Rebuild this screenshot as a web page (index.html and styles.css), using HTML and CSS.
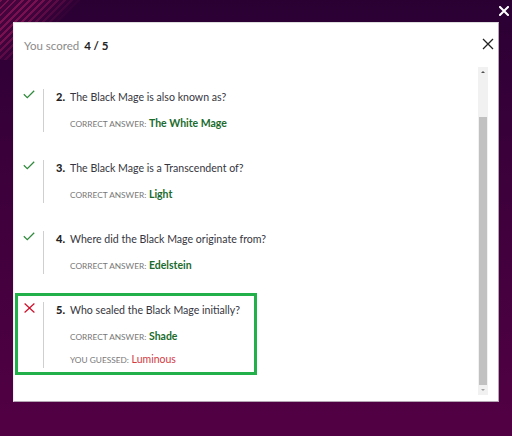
FILE: index.html
```html
<!DOCTYPE html>
<html lang="en">
<head>
<meta charset="utf-8">
<title>Quiz results</title>
<link rel="stylesheet" href="styles.css">
</head>
<body>
<div class="bg-stripes"></div>
<button class="page-close" aria-label="Close">
  <svg viewBox="0 0 10 10" width="10" height="10"><path d="M1 1 L9 9 M9 1 L1 9" stroke="#fff" stroke-width="2" stroke-linecap="square"/></svg>
</button>
<div class="modal">
  <div class="modal-head">
    <span class="score-label">You scored</span>
    <strong class="score">4 / 5</strong>
    <button class="modal-close" aria-label="Close">
      <svg viewBox="0 0 12 12" width="12" height="12"><path d="M1 1 L11 11 M11 1 L1 11" stroke="#222" stroke-width="1.3"/></svg>
    </button>
  </div>
  <div class="modal-body">
    <div class="results">
      <div class="item">
        <div class="icon"><svg viewBox="0 0 12 9" width="12" height="9"><path d="M0.8 4.2 L4.3 7.6 L11.2 0.8" fill="none" stroke="#2f8a3c" stroke-width="1.3"/></svg></div>
        <div class="rule"></div>
        <div class="content">
          <div class="question"><b class="num">2.</b>The Black Mage is also known as?</div>
          <div class="answer"><span class="label">Correct answer:</span> <span class="correct">The White Mage</span></div>
        </div>
      </div>
      <div class="item">
        <div class="icon"><svg viewBox="0 0 12 9" width="12" height="9"><path d="M0.8 4.2 L4.3 7.6 L11.2 0.8" fill="none" stroke="#2f8a3c" stroke-width="1.3"/></svg></div>
        <div class="rule"></div>
        <div class="content">
          <div class="question"><b class="num">3.</b>The Black Mage is a Transcendent of?</div>
          <div class="answer"><span class="label">Correct answer:</span> <span class="correct">Light</span></div>
        </div>
      </div>
      <div class="item">
        <div class="icon"><svg viewBox="0 0 12 9" width="12" height="9"><path d="M0.8 4.2 L4.3 7.6 L11.2 0.8" fill="none" stroke="#2f8a3c" stroke-width="1.3"/></svg></div>
        <div class="rule"></div>
        <div class="content">
          <div class="question"><b class="num">4.</b>Where did the Black Mage originate from?</div>
          <div class="answer"><span class="label">Correct answer:</span> <span class="correct">Edelstein</span></div>
        </div>
      </div>
      <div class="item selected">
        <div class="icon"><svg viewBox="0 0 11 10" width="11" height="10"><path d="M0.6 0.5 L10.4 9.5 M10.4 0.5 L0.6 9.5" stroke="#d0102a" stroke-width="1.2"/></svg></div>
        <div class="rule"></div>
        <div class="content">
          <div class="question"><b class="num">5.</b>Who sealed the Black Mage initially?</div>
          <div class="answer"><span class="label">Correct answer:</span> <span class="correct">Shade</span></div>
          <div class="answer guess-row"><span class="label">You guessed:</span> <span class="wrong">Luminous</span></div>
        </div>
      </div>
    </div>
    <div class="scrollbar">
      <div class="sb-arrow up"></div>
      <div class="sb-track"><div class="sb-thumb"></div></div>
      <div class="sb-arrow down"></div>
    </div>
  </div>
</div>
</body>
</html>
```
FILE: styles.css
```css
* { box-sizing: border-box; }
html, body { margin: 0; padding: 0; }
body {
  width: 512px;
  height: 436px;
  overflow: hidden;
  position: relative;
  font-family: "Lato", "Open Sans", sans-serif;
  background: linear-gradient(to bottom, #2a0033 0%, #3a003a 35%, #520044 100%);
}
.bg-stripes {
  position: absolute;
  left: 0; top: 0;
  width: 80px; height: 60px;
  background: repeating-linear-gradient(135deg, #7a1050 0 2px, #43043e 2px 5px);
  -webkit-mask-image: linear-gradient(135deg, #000 0%, #000 30%, transparent 60%);
  mask-image: linear-gradient(135deg, #000 0%, #000 30%, transparent 60%);
}
button { background: none; border: 0; padding: 0; margin: 0; cursor: pointer; display: block; }
.page-close {
  position: absolute;
  left: 499px; top: 6px;
  width: 10px; height: 10px;
}
.page-close svg, .modal-close svg { display: block; }
.modal {
  position: relative;
  margin: 22px 0 0 13px;
  width: 486px;
  height: 380px;
  background: #fff;
  border: 1px solid #b4a6b2;
  border-top-color: #ddd;
  border-left-color: #eee;
  display: flex;
  flex-direction: column;
}
.modal-head {
  height: 44px;
  display: flex;
  align-items: flex-start;
  padding: 16px 4px 0 10px;
  font-size: 11.5px;
  line-height: 14px;
}
.score-label { color: #8a8a8a; }
.score { color: #222; font-weight: 700; margin-left: 5px; }
.modal-close { margin-left: auto; margin-top: -1px; width: 12px; height: 12px; }
.modal-body {
  flex: 1;
  display: flex;
  padding: 0 10px 6px 1px;
  min-height: 0;
}
.results {
  flex: 1;
  display: flex;
  flex-direction: column;
  align-items: flex-start;
  gap: 10px;
  padding-top: 13px;
}
.item {
  display: flex;
  border: 3px solid transparent;
  padding: 6px 19px 6px 5px;
}
.item.selected { border-color: #22b04a; padding-bottom: 4px; padding-right: 14px; }
.icon { width: 12px; margin-right: 8px; padding-top: 1px; display: flex; justify-content: center; }
.icon svg { display: block; }
.rule { width: 1px; background: #cfcfcf; margin-right: 12px; }
.content { padding-bottom: 1px; }
.question {
  font-size: 10.6px;
  line-height: 16px;
  color: #363640;
  white-space: nowrap;
}
.num { color: #222; font-weight: 900; margin-right: 5px; font-size: 11px; }
.answer {
  margin-top: 10px;
  margin-left: 14px;
  font-size: 10.5px;
  line-height: 16px;
  white-space: nowrap;
}
.answer span { line-height: 1; }
.guess-row { margin-top: 7px; }
.label {
  font-size: 8.3px;
  text-transform: uppercase;
  color: #777;
}
.correct { font-size: 10.5px; font-weight: 700; color: #1b6b2c; }
.wrong { font-size: 10.5px; color: #d23a3f; }
.scrollbar {
  width: 10px;
  display: flex;
  flex-direction: column;
  background: #f1f1f1;
}
.sb-arrow { height: 10px; position: relative; }
.sb-arrow::after {
  content: "";
  position: absolute;
  left: 3px; top: 4px;
  border-left: 2px solid transparent;
  border-right: 2px solid transparent;
}
.sb-arrow.up::after { border-bottom: 2px solid #505050; }
.sb-arrow.down::after { border-top: 2px solid #a3a3a3; }
.sb-track { flex: 1; display: flex; flex-direction: column; padding: 40px 1px 0; }
.sb-thumb { flex: 1; background: #c1c1c1; }
```
